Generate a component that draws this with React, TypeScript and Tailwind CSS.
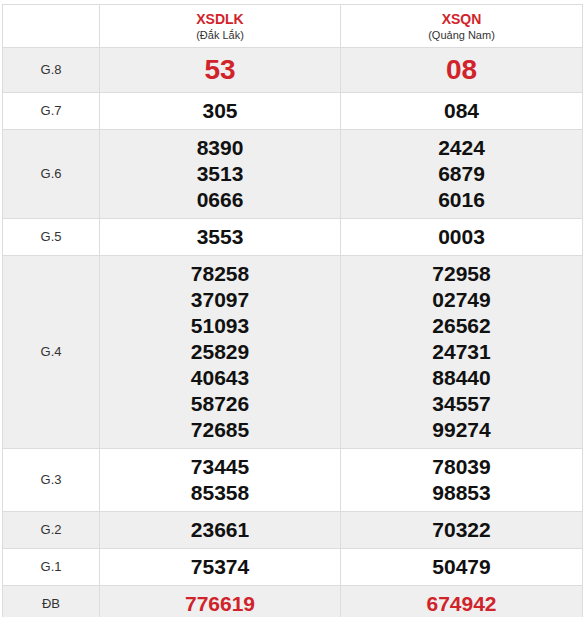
const STATIONS = [
  { code: 'XSDLK', name: '(Đắk Lắk)' },
  { code: 'XSQN', name: '(Quảng Nam)' },
]

const ROWS: { label: string; values: string[][]; kind?: 'g8' | 'db' }[] = [
  { label: 'G.8', values: [['53'], ['08']], kind: 'g8' },
  { label: 'G.7', values: [['305'], ['084']] },
  { label: 'G.6', values: [['8390', '3513', '0666'], ['2424', '6879', '6016']] },
  { label: 'G.5', values: [['3553'], ['0003']] },
  {
    label: 'G.4',
    values: [
      ['78258', '37097', '51093', '25829', '40643', '58726', '72685'],
      ['72958', '02749', '26562', '24731', '88440', '34557', '99274'],
    ],
  },
  { label: 'G.3', values: [['73445', '85358'], ['78039', '98853']] },
  { label: 'G.2', values: [['23661'], ['70322']] },
  { label: 'G.1', values: [['75374'], ['50479']] },
  { label: 'ĐB', values: [['776619'], ['674942']], kind: 'db' },
]

export default function App() {
  return (
    <div className="min-h-[617px] bg-white pl-[2px] pt-[4px] font-['Liberation_Sans',Arial,sans-serif]">
      <table className="w-[580px] table-fixed border-collapse border border-[#dcdcdc]">
        <colgroup>
          <col className="w-[97px]" />
          <col className="w-[241px]" />
          <col className="w-[242px]" />
        </colgroup>
        <thead>
          <tr className="h-[43px] bg-white">
            <th className="border border-[#dcdcdc]" />
            {STATIONS.map(s => (
              <th key={s.code} className="border border-[#dcdcdc] pt-[1px] text-center align-middle">
                <div className="text-[14px] font-bold leading-[16px] text-[#d0232a]">{s.code}</div>
                <div className="text-[11px] font-normal leading-[16px] text-[#333]">{s.name}</div>
              </th>
            ))}
          </tr>
        </thead>
        <tbody>
          {ROWS.map((row, i) => (
            <tr key={row.label} className={i % 2 === 0 ? 'bg-[#efefef]' : 'bg-white'}>
              <td className="border border-[#dcdcdc] text-center align-middle text-[13px] text-[#333]">
                {row.label}
              </td>
              {row.values.map((vals, j) => (
                <td key={j} className="border border-[#dcdcdc] py-[5px] text-center align-middle">
                  {vals.map(v => (
                    <div
                      key={v}
                      className={
                        row.kind === 'g8'
                          ? 'text-[28px] font-bold leading-[34px] text-[#d0232a]'
                          : row.kind === 'db'
                            ? 'text-[21px] font-bold leading-[26px] text-[#d0232a]'
                            : 'text-[21px] font-bold leading-[26px] text-[#111]'
                      }
                    >
                      {v}
                    </div>
                  ))}
                </td>
              ))}
            </tr>
          ))}
        </tbody>
      </table>
    </div>
  )
}
